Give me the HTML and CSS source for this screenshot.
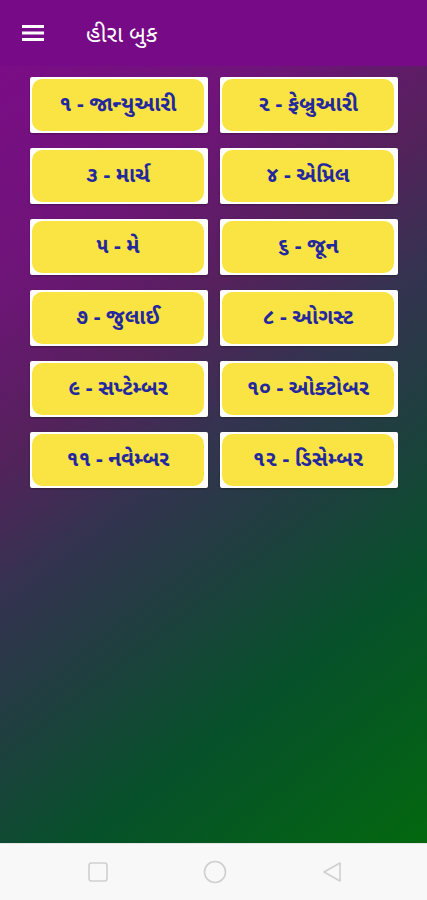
FILE: index.html
```html
<!DOCTYPE html>
<html lang="gu">
  <head>
    <meta charset="UTF-8">
    <title>હીરા બુક</title>
    <link rel="stylesheet" href="styles.css">
  </head>
  <body>
    <div id="app">
      <div class="topbar">
        <svg class="menu" width="24" height="24" viewBox="0 0 24 24">
          <path d="M1 5.5h22M1 12h22M1 18.5h22" stroke="#fff" stroke-width="2.8"/>
        </svg>
        <span class="title">હીરા બુક</span>
      </div>
      <div class="content">
        <div class="months">
          <a class="month" href="#"><span>૧ - જાન્યુઆરી</span></a>
          <a class="month" href="#"><span>૨ - ફેબ્રુઆરી</span></a>
          <a class="month" href="#"><span>૩ - માર્ચ</span></a>
          <a class="month" href="#"><span>૪ - એપ્રિલ</span></a>
          <a class="month" href="#"><span>૫ - મે</span></a>
          <a class="month" href="#"><span>૬ - જૂન</span></a>
          <a class="month" href="#"><span>૭ - જુલાઈ</span></a>
          <a class="month" href="#"><span>૮ - ઓગસ્ટ</span></a>
          <a class="month" href="#"><span>૯ - સપ્ટેમ્બર</span></a>
          <a class="month" href="#"><span>૧૦ - ઓક્ટોબર</span></a>
          <a class="month" href="#"><span>૧૧ - નવેમ્બર</span></a>
          <a class="month" href="#"><span>૧૨ - ડિસેમ્બર</span></a>
        </div>
      </div>
      <div class="navbar">
        <svg width="20" height="20" viewBox="0 0 20 20"><rect x="1" y="1" width="18" height="18" rx="2.5" fill="none" stroke="#cfcfcf" stroke-width="1.6"/></svg>
        <svg width="24" height="24" viewBox="0 0 24 24"><circle cx="12" cy="12" r="10.5" fill="none" stroke="#cfcfcf" stroke-width="1.6"/></svg>
        <svg width="20" height="22" viewBox="0 0 20 22"><path d="M18 2 L2 11 L18 20 Z" fill="none" stroke="#cfcfcf" stroke-width="1.6" stroke-linejoin="round"/></svg>
      </div>
    </div>
  </body>
</html>
```

FILE: styles.css
```css
* {padding: 0; margin: 0; box-sizing: border-box}
body {
  font-family: "Noto Sans Gujarati", "Noto Sans", sans-serif;
  background: #f8f8f8;
}
#app {
  width: 427px;
  height: 900px;
  display: flex;
  flex-direction: column;
}
.topbar {
  height: 66px;
  background: #770a86;
  display: flex;
  align-items: center;
  padding-left: 21px;
  flex: none;
}
.topbar .title {
  color: #fff;
  font-size: 23px;
  margin-left: 41px;
  margin-top: 5px;
}
.content {
  flex: 1;
  background: linear-gradient(142deg, #7b0d86 0%, #6e1578 20%, #55215c 35%, #343350 48%, #203e40 60%, #07502b 75%, #03680f 100%);
  padding: 11px 29px 0 30px;
}
.months {
  display: grid;
  grid-template-columns: 178px 178px;
  column-gap: 12px;
  row-gap: 15px;
}
.month {
  height: 56px;
  background: #fff;
  border-radius: 2px;
  padding: 2px 4px 2px 2px;
  text-decoration: none;
  display: flex;
  box-shadow: 0 1px 2px rgba(0,0,0,0.3);
}
.month span {
  flex: 1;
  background: #f9e443;
  border-radius: 10px;
  display: flex;
  align-items: center;
  justify-content: center;
  color: #24289e;
  font-weight: bold;
  font-size: 21px;
  padding-top: 2px;
}
.navbar {
  height: 57px;
  flex: none;
  background: #f8f8f8;
  border-top: 1px solid #e4e4e4;
  display: flex;
  align-items: center;
  justify-content: center;
  gap: 95px;
  padding-left: 3px;
}
```
